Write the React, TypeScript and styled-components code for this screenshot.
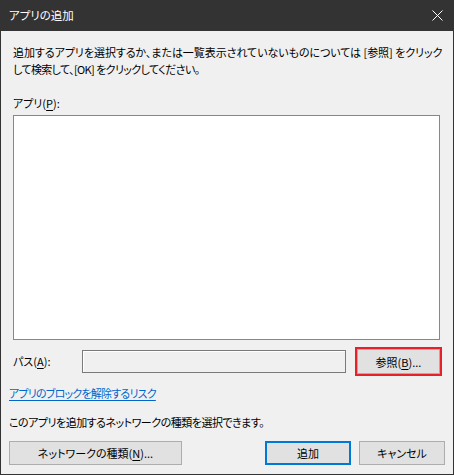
import React from "react";
import styled, { createGlobalStyle } from "styled-components";

const Global = createGlobalStyle`
  html, body { margin: 0; padding: 0; background: #f0f0f0; }
  * { box-sizing: border-box; }
`;

const font = `"Noto Sans CJK JP", "Noto Sans", sans-serif`;

const Window = styled.div`
  width: 454px;
  height: 475px;
  border: 1px solid #333333;
  border-top: none;
  background: #f0f0f0;
  display: flex;
  flex-direction: column;
  font-family: ${font};
  font-feature-settings: "palt" 1;
  font-size: 11px;
  color: #000;
  overflow: hidden;
`;

const TitleBar = styled.div`
  height: 31px;
  background: #333333;
  color: #ffffff;
  display: flex;
  align-items: center;
  justify-content: space-between;
  padding: 0 11px 0 9px;
  margin: 0 -1px;
  font-size: 11.5px;
  line-height: 31px;
`;

const Content = styled.div`
  flex: 1;
  display: flex;
  flex-direction: column;
  padding: 0 8px;
`;

const Inset = styled.div<{ $mt: number }>`
  margin-top: ${(p) => p.$mt}px;
  padding: 0 4px;
`;

const Desc = styled.div`
  display: flex;
  flex-direction: column;
`;

const DescLine = styled.span<{ $ls: number }>`
  line-height: 17px;
  white-space: nowrap;
  letter-spacing: ${(p) => p.$ls}px;
`;

const Label = styled.div`
  line-height: 17px;
`;

const U = styled.span`
  text-decoration: underline;
  text-underline-offset: 2px;
`;

const ListBox = styled.div`
  height: 225px;
  background: #ffffff;
  border: 1px solid #828790;
  margin-right: 1px;
`;

const PathRow = styled.div`
  display: flex;
  align-items: center;
  height: 29px;
`;

const PathLabel = styled.div`
  width: 69px;
  line-height: 17px;
`;

const TextBox = styled.div`
  width: 264px;
  height: 23px;
  border: 1px solid #7a7a7a;
  background: #f0f0f0;
  box-shadow: inset 1px 1px 0 #ffffff;
`;

const Button = styled.button<{ $w: number; $default?: boolean }>`
  width: ${(p) => p.$w}px;
  height: 24px;
  padding: 0;
  background: #e1e1e1;
  border: ${(p) => (p.$default ? "2px solid #0078d7" : "1px solid #adadad")};
  font-family: ${font};
  font-feature-settings: "palt" 1;
  font-size: 11px;
  color: #000;
  line-height: 16px;
`;

const BrowseButton = styled(Button)`
  height: 25px;
  margin-left: 11px;
  outline: 2px solid #e8202a;
  outline-offset: 0;
`;

const LinkText = styled.a`
  display: block;
  margin-top: 9px;
  color: #0066cc;
  text-decoration: underline;
  text-underline-offset: 2px;
  line-height: 17px;
  letter-spacing: -0.8px;
  cursor: pointer;
`;

const Info = styled.div`
  margin-top: 12px;
  line-height: 17px;
  letter-spacing: -0.5px;
`;

const ButtonRow = styled.div`
  margin-top: 10px;
  display: flex;
  align-items: center;
  gap: 8px;
`;

const Spacer = styled.div`
  flex: 1;
`;

const CloseIcon = () => (
  <svg width="11" height="11" viewBox="0 0 11 11">
    <path d="M0.5 0.5 L10.5 10.5 M10.5 0.5 L0.5 10.5" stroke="#ffffff" strokeWidth="1" />
  </svg>
);

export default function App() {
  return (
    <>
      <Global />
      <Window>
        <TitleBar>
          <span>アプリの追加</span>
          <CloseIcon />
        </TitleBar>
        <Content>
          <Inset $mt={13}>
            <Desc>
              <DescLine $ls={-0.05}>
                追加するアプリを選択するか、または一覧表示されていないものについては [参照] をクリック
              </DescLine>
              <DescLine $ls={-0.6}>して検索して、[OK] をクリックしてください。</DescLine>
            </Desc>
          </Inset>
          <Inset $mt={17}>
            <Label>
              アプリ(<U>P</U>):
            </Label>
          </Inset>
          <Inset $mt={3}>
            <ListBox />
          </Inset>
          <Inset $mt={7}>
            <PathRow>
              <PathLabel>
                パス(<U>A</U>):
              </PathLabel>
              <TextBox />
              <BrowseButton $w={83}>
                参照(<U>B</U>)...
              </BrowseButton>
            </PathRow>
          </Inset>
          <LinkText>アプリのブロックを解除するリスク</LinkText>
          <Info>このアプリを追加するネットワークの種類を選択できます。</Info>
          <ButtonRow>
            <Button $w={173}>
              ネットワークの種類(<U>N</U>)...
            </Button>
            <Spacer />
            <Button $w={86} $default>
              追加
            </Button>
            <Button $w={86}>キャンセル</Button>
          </ButtonRow>
        </Content>
      </Window>
    </>
  );
}
